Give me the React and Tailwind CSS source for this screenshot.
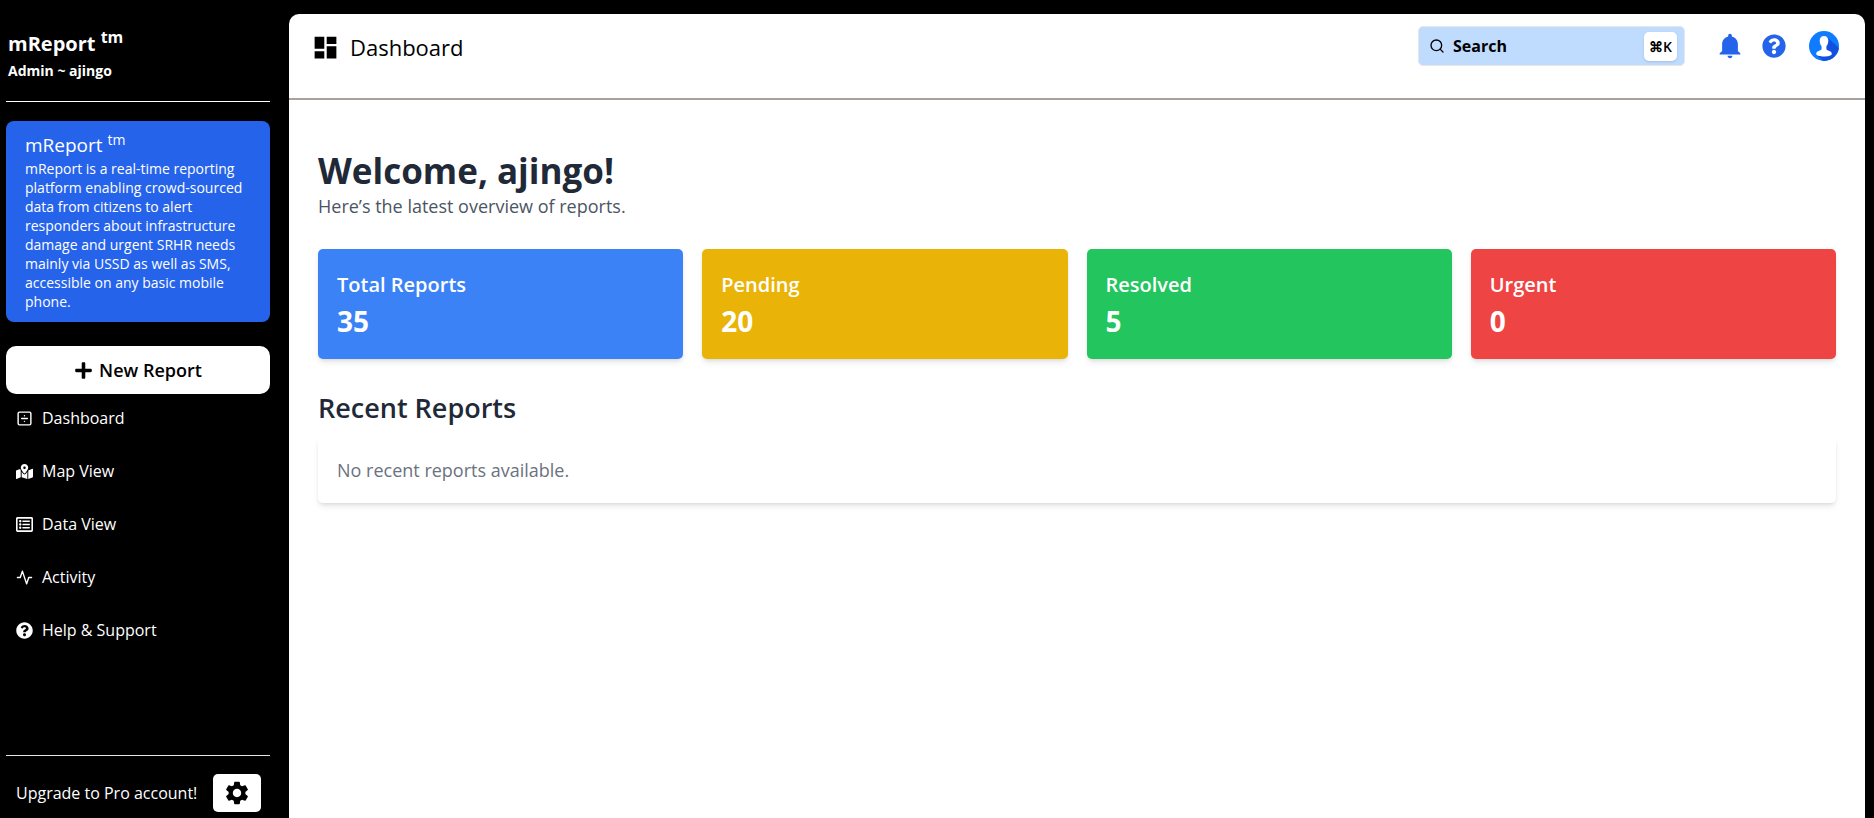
import { FaPlus, FaMapMarkedAlt, FaQuestionCircle, FaRegListAlt } from "react-icons/fa";
import { FiSearch, FiActivity, FiDivideSquare } from "react-icons/fi";
import { MdDashboard, MdSettings } from "react-icons/md";
import { IoMdNotifications } from "react-icons/io";

const nav = [
  { label: "Dashboard", Icon: FiDivideSquare },
  { label: "Map View", Icon: FaMapMarkedAlt },
  { label: "Data View", Icon: FaRegListAlt },
  { label: "Activity", Icon: FiActivity },
  { label: "Help & Support", Icon: FaQuestionCircle },
];

const stats = [
  { label: "Total Reports", value: 35, color: "bg-[#3b82f6]" },
  { label: "Pending", value: 20, color: "bg-[#eab308]" },
  { label: "Resolved", value: 5, color: "bg-[#22c55e]" },
  { label: "Urgent", value: 0, color: "bg-[#ef4444]" },
];

function Avatar() {
  return (
    <svg viewBox="0 0 30 30" className="size-[30px]" aria-hidden="true">
      <clipPath id="disc">
        <circle cx="15" cy="15" r="15" />
      </clipPath>
      <g clipPath="url(#disc)">
        <rect width="30" height="30" fill="#0f7bff" />
        <path d="M18 6 L30 17 V30 H14 L8 24 L17 18 Z" fill="#1250e0" />
      </g>
      <path
        d="M15 5c-2.700 0-4.300 1.900-4.300 4.600 0 2.600.9 4.500 1.900 5.700v2.400c0 1-.7 1.400-1.900 1.800-2.400.8-3.500 1.700-3.500 3.500 0 1.600 3.400 2.500 7.800 2.500s7.800-.9 7.800-2.500c0-1.800-1.100-2.700-3.500-3.500-1.200-.4-1.900-.8-1.900-1.800v-2.400c1-1.200 1.900-3.100 1.900-5.700C19.300 6.900 17.700 5 15 5z"
        fill="#fff"
      />
    </svg>
  );
}

function Sidebar() {
  return (
    <aside className="flex w-[264px] shrink-0 flex-col text-white">
      <header className="flex h-[102px] flex-col border-b border-white px-[2px] pt-7">
        <h1 className="text-[20px] leading-8 font-bold">
          mReport <sup className="text-[16px]">tm</sup>
        </h1>
        <p className="text-[14px] leading-[22px] font-bold">Admin ~ ajingo</p>
      </header>
      <section className="mt-[19px] rounded-lg bg-[#2563eb] px-[19px] pt-[10px] pb-[11px]">
        <h2 className="text-[19px] leading-7">
          mReport <sup className="text-[14px]">tm</sup>
        </h2>
        <p className="text-[14px] leading-[19px] font-medium">
          mReport is a real-time reporting platform enabling crowd-sourced data from citizens to alert responders about infrastructure damage and urgent SRHR needs mainly via USSD as well as SMS, accessible on any basic mobile phone.
        </p>
      </section>
      <button type="button" className="mt-6 flex h-12 shrink-0 items-center justify-center gap-[6px] rounded-[10px] bg-white text-[18px] font-semibold text-black">
        <FaPlus className="size-[19px]" />
        New Report
      </button>
      <nav className="flex flex-col gap-[5px]">
        {nav.map(({ label, Icon }) => (
          <a key={label} href="#" className="flex h-12 items-center gap-[9px] px-[10px] text-[16px] font-medium">
            <Icon className="size-[17px]" />
            {label}
          </a>
        ))}
      </nav>
      <footer className="mt-auto flex h-[63px] items-center justify-between border-t border-[#e5e5e5] pr-[9px] pl-[10px] pt-3">
        <span className="text-[16px] font-medium">Upgrade to Pro account!</span>
        <button type="button" aria-label="Settings" className="flex h-[38px] w-12 items-center justify-center rounded-[5px] bg-white text-black">
          <MdSettings className="size-7" />
        </button>
      </footer>
    </aside>
  );
}

function TopBar() {
  return (
    <header className="flex h-[86px] items-start justify-between border-b-2 border-[#a8a29e] pr-[26px] pl-[22px]">
      <div className="flex h-[66px] items-center gap-[10px] text-[22px]">
        <MdDashboard className="size-[29px]" />
        Dashboard
      </div>
      <div className="flex items-center pt-3 text-[#2563eb]">
        <label className="mr-[30px] flex h-10 w-[267px] items-center gap-2 rounded-[5px] border border-gray-200 bg-[#bfdbfe] pr-[7px] pl-[10px] text-black">
          <FiSearch className="size-4" />
          <input type="search" placeholder="Search" aria-label="Search" className="min-w-0 flex-1 text-[16px] font-bold outline-none placeholder:text-black" />
          <kbd className="rounded-[5px] bg-white px-[5px] font-['Open_Sans',sans-serif] text-[14px] leading-[29px] font-semibold shadow">⌘K</kbd>
        </label>
        <button type="button" aria-label="Notifications" className="mr-[17px]">
          <IoMdNotifications className="size-[30px]" />
        </button>
        <button type="button" aria-label="Help" className="mr-[23px]">
          <FaQuestionCircle className="size-6" />
        </button>
        <button type="button" aria-label="Profile">
          <Avatar />
        </button>
      </div>
    </header>
  );
}

export default function App() {
  return (
    <div className="flex min-h-screen bg-black pr-[9px] pl-[6px] font-['Open_Sans',sans-serif]">
      <Sidebar />
      <div className="mt-[14px] ml-[19px] min-w-0 flex-1 rounded-t-[10px] bg-white">
        <TopBar />
        <main className="px-[29px] pt-[49px]">
          <h2 className="text-[35px] leading-[44px] font-bold text-[#1f2937]">Welcome, ajingo!</h2>
          <p className="text-[18px] leading-[26px] text-[#4b5563]">Here’s the latest overview of reports.</p>
          <div className="mt-[30px] grid grid-cols-4 gap-[19px]">
            {stats.map((s) => (
              <div key={s.label} className={`h-[110px] rounded-[5px] px-[19px] pt-[19px] text-white shadow-md ${s.color}`}>
                <h3 className="text-[20px] leading-[34px] font-semibold">{s.label}</h3>
                <p className="text-[28px] leading-[38px] font-bold">{s.value}</p>
              </div>
            ))}
          </div>
          <h2 className="mt-[30px] text-[27px] leading-[38px] font-semibold text-[#1f2937]">Recent Reports</h2>
          <div className="mt-[10px] rounded-[5px] bg-white p-[19px] text-[18px] leading-7 text-[#6b7280] shadow-md">
            No recent reports available.
          </div>
        </main>
      </div>
    </div>
  );
}
